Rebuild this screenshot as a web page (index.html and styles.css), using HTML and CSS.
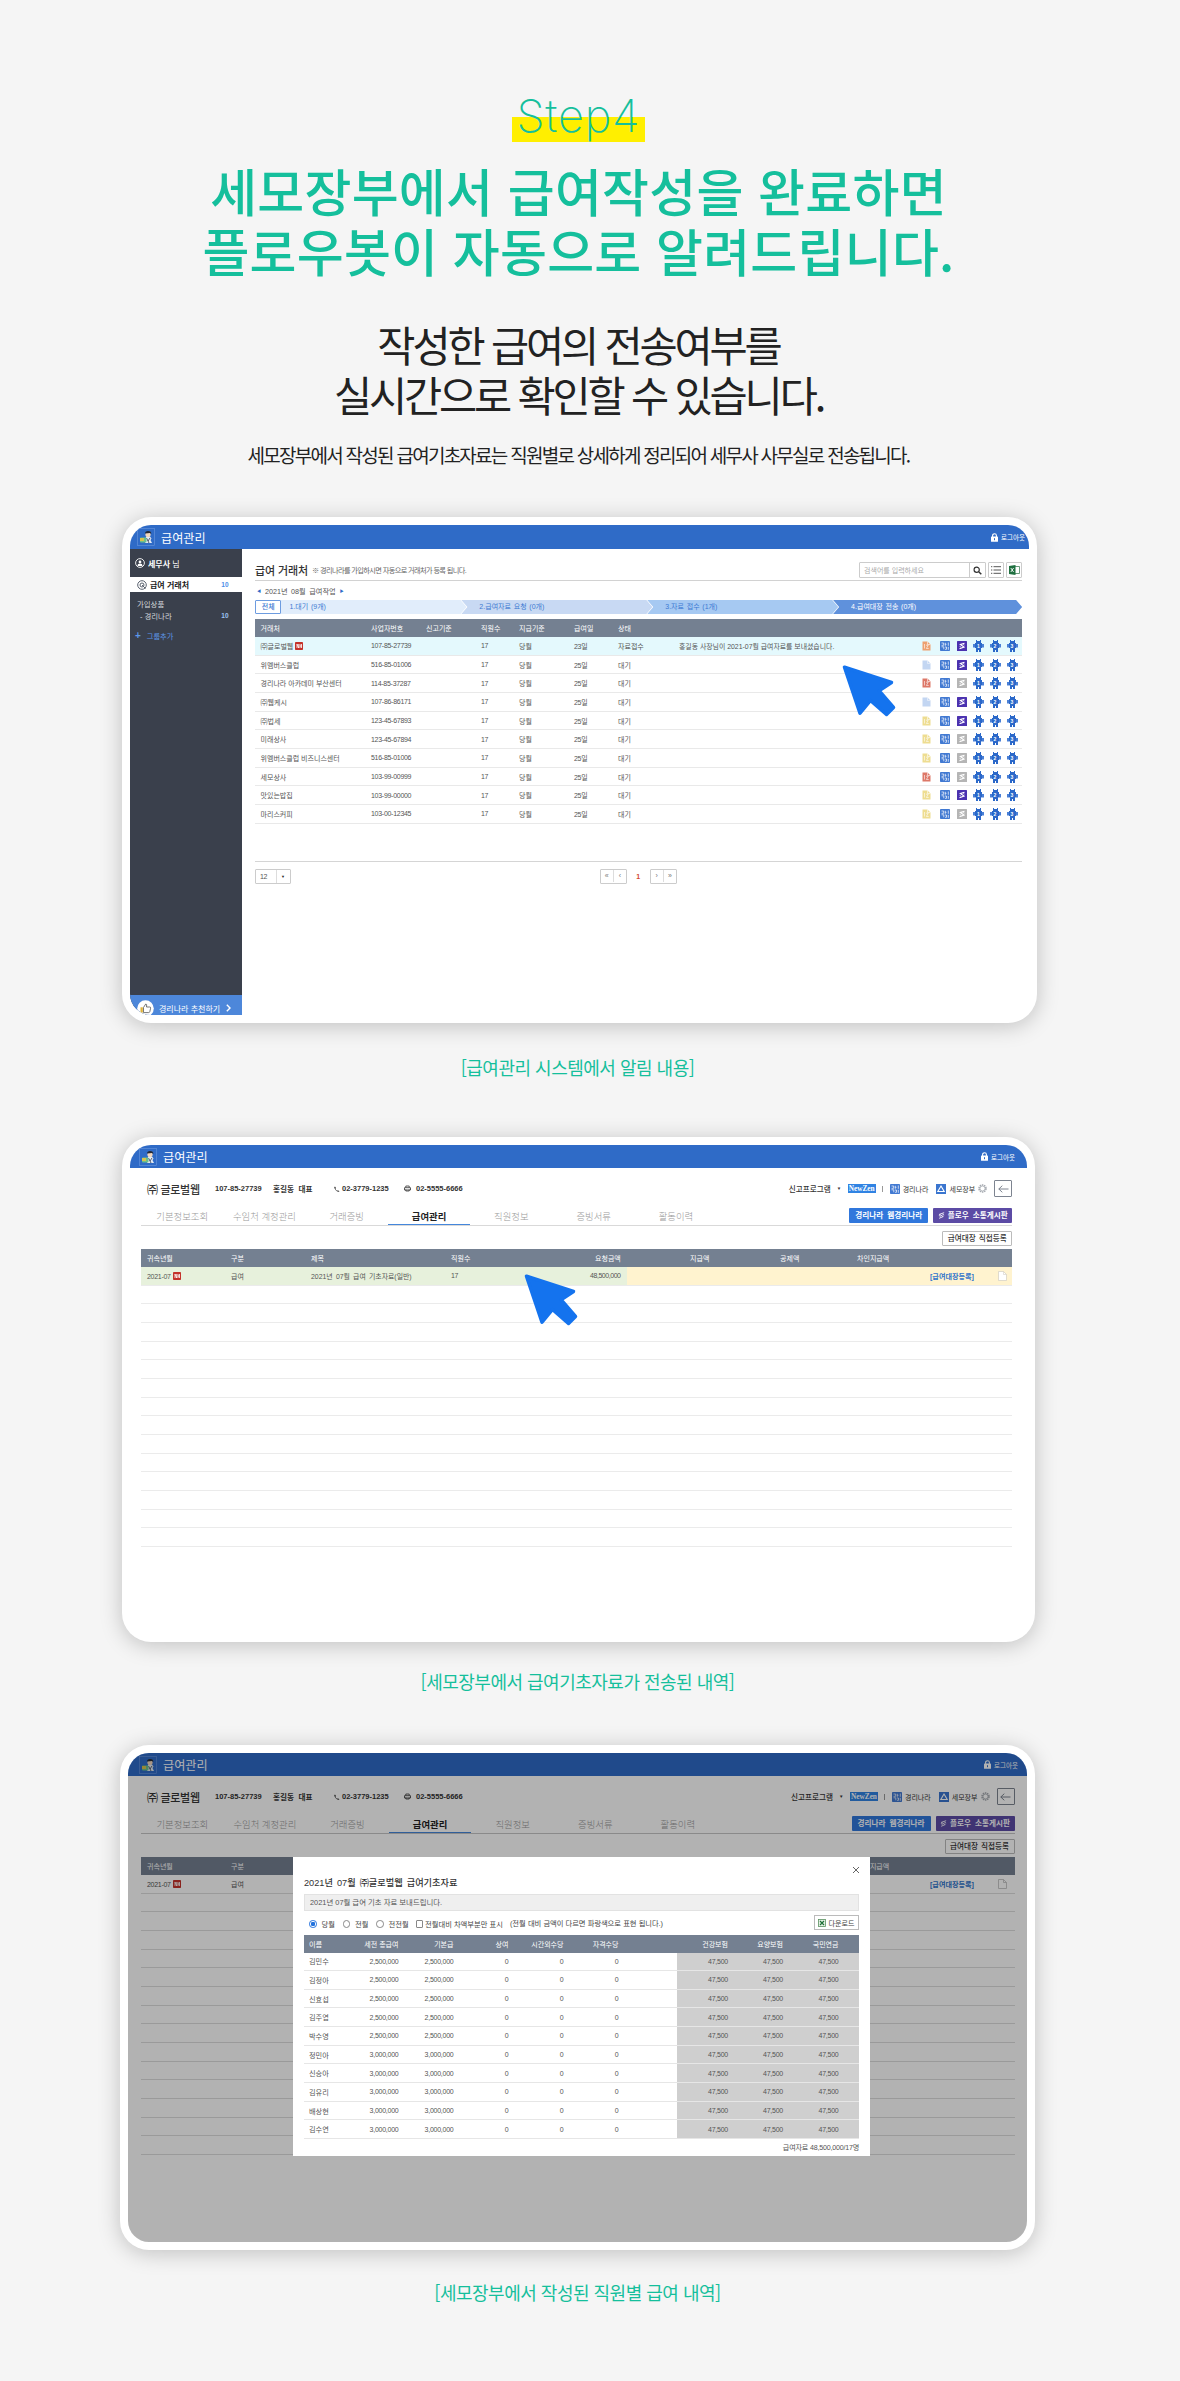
FILE: index.html
```html
<!DOCTYPE html>
<html lang="ko">
<head>
<meta charset="utf-8">
<title>Step4 급여 전송 알림</title>
<link rel="stylesheet" href="styles.css">
</head>
<body>
<svg class="defs" aria-hidden="true">
  <symbol id="logo" viewBox="0 0 18 18"><rect x=".5" y=".5" width="17" height="17" fill="none" stroke="#6b96dd" stroke-width=".6"/><path d="M9 8.500h4l1.500 2-1 1.500 1.500 3H8z" fill="#e3ebf5"/><circle cx="11" cy="6.500" r="2.600" fill="#f3d7bd"/><path d="M8 5.500Q8 3 11 3q3.500 0 3.300 3L13 5z" fill="#262a33"/><path d="M9.500 10l2.500 5M13 10l-2 3" stroke="#30394d" stroke-width=".8"/><rect x="3" y="9.500" width="6.500" height="5" rx="1" fill="#6cc08c"/><path d="M3 10h4v3H3z" fill="#d6c34f"/></symbol>
  <symbol id="lock" viewBox="0 0 7 9"><path d="M1.600 4V2.600a1.900 1.900 0 0 1 3.800 0V4" fill="none" stroke="currentColor" stroke-width="1.100"/><rect y="3.600" width="7" height="5.200" rx=".6" fill="currentColor"/><path d="M3.500 5.200v2" stroke="#2f6bc7" stroke-width="1"/></symbol>
  <symbol id="cursor" viewBox="0 0 54 53"><path d="M2.500 2.200L49.500 17.500L37 25.700L51.500 42.500L44.500 49.500L28.500 35.500L18 48.200Z" fill="#1473ee" stroke="#1473ee" stroke-width="3.500" stroke-linejoin="round"/></symbol>
  <symbol id="user" viewBox="0 0 10 10"><circle cx="5" cy="5" r="4.400" fill="none" stroke="#fff" stroke-width=".9"/><circle cx="5" cy="3.900" r="1.400" fill="#fff"/><path d="M2.600 7.900V7q0-1.600 2.400-1.600T7.400 7v.9z" fill="#fff"/></symbol>
  <symbol id="target" viewBox="0 0 10 10"><circle cx="5" cy="5" r="4.300" fill="none" stroke="#59616e" stroke-width="1"/><circle cx="5" cy="5" r="2" fill="none" stroke="#59616e" stroke-width="1"/><path d="M5 5l3.500 3.500" stroke="#59616e"/></symbol>
  <symbol id="search" viewBox="0 0 9 9"><circle cx="3.700" cy="3.700" r="2.600" fill="none" stroke="#333" stroke-width="1.200"/><path d="M5.700 5.700L8.300 8.300" stroke="#333" stroke-width="1.500"/></symbol>
  <symbol id="list" viewBox="0 0 10 9"><path d="M0 1.200h1.300M0 4.500h1.300M0 7.800h1.300M2.500 1.200H10M2.500 4.500H10M2.500 7.800H10" stroke="#555" stroke-width="1"/></symbol>
  <symbol id="xls" viewBox="0 0 11 10"><path d="M6 1.500h4.500v7H6" fill="#fff" stroke="#43825a" stroke-width=".8"/><path d="M0 1L6.500 0v10L0 9z" fill="#1f7040"/><path d="M1.800 3l2.800 4M4.600 3L1.800 7" stroke="#fff" stroke-width=".9"/></symbol>
  <symbol id="doc" viewBox="0 0 9 10"><path d="M.5 .5H5.500L8.500 3.500V9.500H.5Z" fill="currentColor"/><path d="M5.500 .5V3.500H8.500" fill="none" stroke="#fff" stroke-width=".5"/></symbol>
  <symbol id="docd" viewBox="0 0 9 10"><path d="M.5 .5H5.500L8.500 3.500V9.500H.5Z" fill="currentColor"/><path d="M2.500 3v4.500M4 4.200h2.200L4.400 7.500h2.300M5.500 .5V3.500H8.500" fill="none" stroke="#fff" stroke-width=".6"/></symbol>
  <symbol id="blank" viewBox="0 0 9 10"><path d="M.5 .5H5.500L8.500 3.500V9.500H.5Z" fill="#fff" stroke="#d3cfc2" stroke-width=".7"/><path d="M5.500 .5V3.500H8.500" fill="none" stroke="#d3cfc2" stroke-width=".6"/></symbol>
  <symbol id="outline" viewBox="0 0 9 10"><path d="M.5 .5H5.500L8.500 3.500V9.500H.5ZM5.500 .5V3.500H8.500" fill="none" stroke="#bbb" stroke-width=".8"/></symbol>
  <symbol id="book" viewBox="0 0 10 10"><rect width="10" height="10" rx=".8" fill="#4179d2"/><path d="M1.500 2h2.200v2.300H1.500M5.300 1.800v3M5.300 3.300h1.200M8.300 1.500v3.300M1.500 5.800h2.300v2.500M5 6h1.500v2.300H5M8.300 5.800v3" fill="none" stroke="#fff" stroke-width=".7"/></symbol>
  <symbol id="flow" viewBox="0 0 10 10"><rect width="10" height="10" rx=".5" fill="currentColor"/><path d="M7.500 2.200L3.400 3.500l3.600 2.600-4.500 1.700" fill="none" stroke="#fff" stroke-width="1.200"/><path d="M2.500 5.300l1.700.8M5.800 3.300l1.700.8" stroke="#fff" stroke-width=".7"/></symbol>
  <symbol id="new" viewBox="0 0 8 8"><rect width="8" height="8" rx=".8" fill="#c4322a"/><path d="M2 6V2l1.700 4V2M5 2v4M6.500 2v4M5 4h1.500" fill="none" stroke="#fff" stroke-width=".8"/></symbol>
  <symbol id="thumb" viewBox="0 0 17 17"><circle cx="8.500" cy="8.500" r="8.300" fill="#fff"/><path d="M6.500 7.500l2.300-3.600q1.400.3.700 3.100h3.300q1 0 .8 1.200l-.8 3.500q-.3.900-1.200.9H6.500z" fill="#fff" stroke="#555" stroke-width=".8"/><rect x="3.500" y="7.300" width="2.300" height="5.300" fill="#e0b33a"/></symbol>
  <symbol id="phone" viewBox="0 0 6 6"><path d="M1 .5l1 1.500-.6.7q.5 1.300 1.800 2l.8-.5L5.500 5.500Q4 6.300 2.200 4.700T.2 1.200z" fill="#333"/></symbol>
  <symbol id="fax" viewBox="0 0 7 6"><path d="M1.800 2V.5h3.400V2M.5 2.200h6v2.300h-6zM1.800 4v1.500h3.400V4" fill="none" stroke="#333" stroke-width=".8"/></symbol>
  <symbol id="semo" viewBox="0 0 10 10"><rect width="10" height="10" fill="#3a75cf"/><path d="M5 2L8.200 7.500H1.800z" fill="none" stroke="#fff" stroke-width="1.100"/></symbol>
  <symbol id="gear" viewBox="0 0 9 9"><circle cx="4.500" cy="4.500" r="3.500" fill="none" stroke="#a5a9b0" stroke-width="1.500" stroke-dasharray="1.500 .7"/><circle cx="4.500" cy="4.500" r="2.500" fill="none" stroke="#a5a9b0" stroke-width=".8"/></symbol>
  <symbol id="back" viewBox="0 0 11 8"><path d="M10.500 4H.8M4.300 .7L.8 4l3.500 3.300" fill="none" stroke="#6f7784" stroke-width=".9"/></symbol>
  <symbol id="bolt" viewBox="0 0 7 8"><path d="M6.500 .8L1 2.700l4.500 2.500L.8 7.200M.5 4l2 1M4.500 2.500l2 1" fill="none" stroke="#fff" stroke-width="1"/></symbol>
</svg>

<main class="page">
  <header class="intro">
    <p class="step">Step4</p>
    <h1 class="headline">세모장부에서 급여작성을 완료하면<br><span class="second">플로우봇이 자동으로 알려드립니다.</span></h1>
    <h2 class="sub">작성한 급여의 전송여부를<br><span class="second">실시간으로 확인할 수 있습니다.</span></h2>
    <p class="desc">세모장부에서 작성된 급여기초자료는 직원별로 상세하게 정리되어 세무사 사무실로 전송됩니다.</p>
  </header>

  <section class="card card-list">
    <div class="screen">
      <div class="bar"><svg class="logo"><use href="#logo"/></svg><b class="bar-title">급여관리</b><span class="logout"><svg class="lock"><use href="#lock"/></svg>로그아웃</span></div>
      <div class="split">
        <aside class="side">
          <div class="me"><svg class="i10"><use href="#user"/></svg><span><b>세무사</b> 님</span></div>
          <div class="on"><svg class="i10"><use href="#target"/></svg><b>급여 거래처</b><em>10</em></div>
          <div class="grp">가입상품</div>
          <div class="leaf"><span>- 경리나라</span><em>10</em></div>
          <div class="add"><i>+</i>그룹추가</div>
          <div class="promo"><svg class="thumb"><use href="#thumb"/></svg><span>경리나라 추천하기</span><svg class="chev" viewBox="0 0 5 8"><path d="M.8 .8L4 4 .8 7.200" fill="none" stroke="#fff" stroke-width="1.400"/></svg></div>
        </aside>
        <div class="content">
          <div class="title-row">
            <strong>급여 거래처</strong><small>※ 경리나라를 가입하시면 자동으로 거래처가 등록 됩니다.</small>
            <div class="tools"><div class="search"><span>검색어를 입력하세요</span><i><svg class="i9"><use href="#search"/></svg></i></div><div class="tool"><svg class="i10"><use href="#list"/></svg></div><div class="tool"><svg class="i11"><use href="#xls"/></svg></div></div>
          </div>
          <div class="month"><i>◀</i><span>2021년 08월 급여작업</span><i>▶</i></div>
          <div class="steps"><b class="all">전체</b><span class="s1">1.대기 (9개)</span><span class="s2">2.급여자료 요청 (0개)</span><span class="s3">3.자료 접수 (1개)</span><span class="s4">4.급여대장 전송 (0개)</span></div>
          <div class="clients">
            <div class="row head"><span>거래처</span><span>사업자번호</span><span>신고기준</span><span>직원수</span><span>지급기준</span><span>급여일</span><span>상태</span></div>
            <div class="row hot"><span>㈜글로벌웹<svg class="new"><use href="#new"/></svg></span><span class="n">107-85-27739</span><span></span><span class="n">17</span><span>당월</span><span class="n">23일</span><span>자료접수</span><span class="msg">홍길동 사장님이 2021-07월 급여자료를 보내셨습니다.</span><svg class="doc orange"><use href="#docd"/></svg><svg class="sq"><use href="#book"/></svg><svg class="sq purple"><use href="#flow"/></svg><u>1</u><u>2</u><u>3</u></div>
            <div class="row"><span>위멤버스클럽</span><span class="n">516-85-01006</span><span></span><span class="n">17</span><span>당월</span><span class="n">25일</span><span>대기</span><span></span><svg class="doc sky"><use href="#doc"/></svg><svg class="sq"><use href="#book"/></svg><svg class="sq purple"><use href="#flow"/></svg><u>1</u><u>2</u><u>3</u></div>
            <div class="row"><span>경리나라 아카데미 부산센터</span><span class="n">114-85-37287</span><span></span><span class="n">17</span><span>당월</span><span class="n">25일</span><span>대기</span><span></span><svg class="doc red"><use href="#docd"/></svg><svg class="sq"><use href="#book"/></svg><svg class="sq gray"><use href="#flow"/></svg><u>1</u><u>2</u><u>3</u></div>
            <div class="row"><span>㈜웹케시</span><span class="n">107-86-86171</span><span></span><span class="n">17</span><span>당월</span><span class="n">25일</span><span>대기</span><span></span><svg class="doc sky"><use href="#doc"/></svg><svg class="sq"><use href="#book"/></svg><svg class="sq purple"><use href="#flow"/></svg><u>1</u><u>2</u><u>3</u></div>
            <div class="row"><span>㈜법세</span><span class="n">123-45-67893</span><span></span><span class="n">17</span><span>당월</span><span class="n">25일</span><span>대기</span><span></span><svg class="doc yellow"><use href="#docd"/></svg><svg class="sq"><use href="#book"/></svg><svg class="sq purple"><use href="#flow"/></svg><u>1</u><u>2</u><u>3</u></div>
            <div class="row"><span>미래상사</span><span class="n">123-45-67894</span><span></span><span class="n">17</span><span>당월</span><span class="n">25일</span><span>대기</span><span></span><svg class="doc yellow"><use href="#docd"/></svg><svg class="sq"><use href="#book"/></svg><svg class="sq gray"><use href="#flow"/></svg><u>1</u><u>2</u><u>3</u></div>
            <div class="row"><span>위멤버스클럽 비즈니스센터</span><span class="n">516-85-01006</span><span></span><span class="n">17</span><span>당월</span><span class="n">25일</span><span>대기</span><span></span><svg class="doc yellow"><use href="#docd"/></svg><svg class="sq"><use href="#book"/></svg><svg class="sq gray"><use href="#flow"/></svg><u>1</u><u>2</u><u>3</u></div>
            <div class="row"><span>세모상사</span><span class="n">103-99-00999</span><span></span><span class="n">17</span><span>당월</span><span class="n">25일</span><span>대기</span><span></span><svg class="doc red"><use href="#docd"/></svg><svg class="sq"><use href="#book"/></svg><svg class="sq gray"><use href="#flow"/></svg><u>1</u><u>2</u><u>3</u></div>
            <div class="row"><span>맛있는밥집</span><span class="n">103-99-00000</span><span></span><span class="n">17</span><span>당월</span><span class="n">25일</span><span>대기</span><span></span><svg class="doc yellow"><use href="#docd"/></svg><svg class="sq"><use href="#book"/></svg><svg class="sq purple"><use href="#flow"/></svg><u>1</u><u>2</u><u>3</u></div>
            <div class="row"><span>마리스커피</span><span class="n">103-00-12345</span><span></span><span class="n">17</span><span>당월</span><span class="n">25일</span><span>대기</span><span></span><svg class="doc yellow"><use href="#docd"/></svg><svg class="sq"><use href="#book"/></svg><svg class="sq gray"><use href="#flow"/></svg><u>1</u><u>2</u><u>3</u></div>
          </div>
          <div class="pager"><div class="size"><span>12</span><i>▼</i></div><div class="pg"><i>«</i><i>‹</i></div><b>1</b><div class="pg"><i>›</i><i>»</i></div></div>
        </div>
      </div>
    </div>
    <svg class="cursor cursor-a"><use href="#cursor"/></svg>
  </section>
  <p class="caption">[급여관리 시스템에서 알림 내용]</p>

  <section class="card card-sent">
    <div class="screen detail">
      <div class="bar"><svg class="logo"><use href="#logo"/></svg><b class="bar-title">급여관리</b><span class="logout"><svg class="lock"><use href="#lock"/></svg>로그아웃</span></div>
      <div class="body">
        <div class="info"><strong>㈜ 글로벌웹</strong><b class="bn">107-85-27739</b><b class="ceo">홍길동 대표</b><b class="tel"><svg class="i6"><use href="#phone"/></svg>02-3779-1235</b><b class="tel fax"><svg class="i7"><use href="#fax"/></svg>02-5555-6666</b>
          <div class="links"><b>신고프로그램</b><i>▼</i><mark>NewZen</mark><s></s><svg class="i10"><use href="#book"/></svg><span>경리나라</span><svg class="i10 m"><use href="#semo"/></svg><span>세모장부</span><svg class="i9"><use href="#gear"/></svg><div class="back"><svg class="i11"><use href="#back"/></svg></div></div></div>
        <div class="tabs"><span>기본정보조회</span><span>수임처 계정관리</span><span>거래증빙</span><span class="cur">급여관리</span><span>직원정보</span><span>증빙서류</span><span>활동이력</span><div class="btns"><b>경리나라 웹경리나라</b><b class="violet"><svg class="i7"><use href="#bolt"/></svg>플로우 소통게시판</b></div></div>
        <div class="reg"><b>급여대장 직접등록</b></div>
        <div class="sheet">
          <div class="line head"><span>귀속년월</span><span>구분</span><span>제목</span><span>직원수</span><span>요청금액</span><span>지급액</span><span>공제액</span><span>차인지급액</span></div>
          <div class="line fill"><span class="n">2021-07<svg class="new"><use href="#new"/></svg></span><span>급여</span><span class="t">2021년 07월 급여 기초자료(일반)</span><span class="n">17</span><span class="n sum">48,500,000</span><span></span><span></span><span></span><b>[급여대장등록]</b><svg class="doc"><use href="#blank"/></svg></div>
          <div class="line"></div><div class="line"></div><div class="line"></div><div class="line"></div><div class="line"></div><div class="line"></div><div class="line"></div><div class="line"></div><div class="line"></div><div class="line"></div><div class="line"></div><div class="line"></div><div class="line"></div><div class="line"></div>
        </div>
      </div>
    </div>
    <svg class="cursor cursor-b"><use href="#cursor"/></svg>
  </section>
  <p class="caption">[세모장부에서 급여기초자료가 전송된 내역]</p>

  <section class="card card-modal">
    <div class="screen detail">
      <div class="bar"><svg class="logo"><use href="#logo"/></svg><b class="bar-title">급여관리</b><span class="logout"><svg class="lock"><use href="#lock"/></svg>로그아웃</span></div>
      <div class="body">
        <div class="info"><strong>㈜ 글로벌웹</strong><b class="bn">107-85-27739</b><b class="ceo">홍길동 대표</b><b class="tel"><svg class="i6"><use href="#phone"/></svg>02-3779-1235</b><b class="tel fax"><svg class="i7"><use href="#fax"/></svg>02-5555-6666</b>
          <div class="links"><b>신고프로그램</b><i>▼</i><mark>NewZen</mark><s></s><svg class="i10"><use href="#book"/></svg><span>경리나라</span><svg class="i10 m"><use href="#semo"/></svg><span>세모장부</span><svg class="i9"><use href="#gear"/></svg><div class="back"><svg class="i11"><use href="#back"/></svg></div></div></div>
        <div class="tabs"><span>기본정보조회</span><span>수임처 계정관리</span><span>거래증빙</span><span class="cur">급여관리</span><span>직원정보</span><span>증빙서류</span><span>활동이력</span><div class="btns"><b>경리나라 웹경리나라</b><b class="violet"><svg class="i7"><use href="#bolt"/></svg>플로우 소통게시판</b></div></div>
        <div class="reg"><b>급여대장 직접등록</b></div>
        <div class="sheet">
          <div class="line head"><span>귀속년월</span><span>구분</span><span></span><span></span><span></span><span></span><span></span><span>차인지급액</span></div>
          <div class="line"><span class="n">2021-07<svg class="new"><use href="#new"/></svg></span><span>급여</span><span></span><span></span><span></span><span></span><span></span><span></span><b>[급여대장등록]</b><svg class="doc"><use href="#outline"/></svg></div>
          <div class="line"></div><div class="line"></div><div class="line"></div><div class="line"></div><div class="line"></div><div class="line"></div><div class="line"></div><div class="line"></div><div class="line"></div><div class="line"></div><div class="line"></div><div class="line"></div><div class="line"></div><div class="line"></div>
        </div>
      </div>
      <div class="dim"></div>
      <div class="modal">
        <svg class="close" viewBox="0 0 8 8"><path d="M1 1l6 6M7 1L1 7" stroke="#555" stroke-width=".9"/></svg>
        <h3>2021년 07월 ㈜글로벌웹 급여기초자료</h3>
        <p class="notice">2021년 07월 급여 기초 자료 보내드립니다.</p>
        <div class="filter"><i class="radio sel"></i><span class="w1">당월</span><i class="radio"></i><span class="w2">전월</span><i class="radio"></i><span class="w3">전전월</span><i class="check"></i><span class="w4">전월대비 차액부분만 표시</span><span class="tip">(전월 대비 금액이 다르면 파랑색으로 표현 됩니다.)</span><div class="down"><svg viewBox="0 0 8 8"><rect x=".5" y=".5" width="7" height="7" fill="#e5f1e5" stroke="#5a9160" stroke-width=".8"/><path d="M2 2l4 4M6 2L2 6" stroke="#1f7037" stroke-width="1.200"/></svg>다운로드</div></div>
        <div class="pay">
          <div class="prow head"><span>이름</span><span>세전 총급여</span><span>기본급</span><span>상여</span><span>시간외수당</span><span>자격수당</span><span>건강보험</span><span>요양보험</span><span>국민연금</span></div>
          <div class="prow"><span>김민수</span><span>2,500,000</span><span>2,500,000</span><span>0</span><span>0</span><span>0</span><span>47,500</span><span>47,500</span><span>47,500</span></div>
          <div class="prow"><span>김정아</span><span>2,500,000</span><span>2,500,000</span><span>0</span><span>0</span><span>0</span><span>47,500</span><span>47,500</span><span>47,500</span></div>
          <div class="prow"><span>신효섭</span><span>2,500,000</span><span>2,500,000</span><span>0</span><span>0</span><span>0</span><span>47,500</span><span>47,500</span><span>47,500</span></div>
          <div class="prow"><span>김주엽</span><span>2,500,000</span><span>2,500,000</span><span>0</span><span>0</span><span>0</span><span>47,500</span><span>47,500</span><span>47,500</span></div>
          <div class="prow"><span>박수영</span><span>2,500,000</span><span>2,500,000</span><span>0</span><span>0</span><span>0</span><span>47,500</span><span>47,500</span><span>47,500</span></div>
          <div class="prow"><span>정민아</span><span>3,000,000</span><span>3,000,000</span><span>0</span><span>0</span><span>0</span><span>47,500</span><span>47,500</span><span>47,500</span></div>
          <div class="prow"><span>신승아</span><span>3,000,000</span><span>3,000,000</span><span>0</span><span>0</span><span>0</span><span>47,500</span><span>47,500</span><span>47,500</span></div>
          <div class="prow"><span>김유리</span><span>3,000,000</span><span>3,000,000</span><span>0</span><span>0</span><span>0</span><span>47,500</span><span>47,500</span><span>47,500</span></div>
          <div class="prow"><span>배상현</span><span>3,000,000</span><span>3,000,000</span><span>0</span><span>0</span><span>0</span><span>47,500</span><span>47,500</span><span>47,500</span></div>
          <div class="prow"><span>김수연</span><span>3,000,000</span><span>3,000,000</span><span>0</span><span>0</span><span>0</span><span>47,500</span><span>47,500</span><span>47,500</span></div>
        </div>
        <p class="total">급여자료 48,500,000/17명</p>
      </div>
    </div>
  </section>
  <p class="caption">[세모장부에서 작성된 직원별 급여 내역]</p>
</main>
</body>
</html>
```
FILE: styles.css
```css
* { box-sizing: border-box; }
body { margin: 0; height: 2381px; background: #f5f5f5; color: #222; font-family: "Noto Sans CJK KR", sans-serif; }
.defs { display: none; }
svg { display: block; flex: none; }
i, em { font-style: normal; }
p, h1, h2, h3 { margin: 0; }
.page { width: 1157px; }

/* intro */
.intro { height: 517px; padding-top: 92px; text-align: center; white-space: nowrap; }
.step { width: 133px; height: 50px; margin: 0 auto; line-height: 48px; font-family: Inter, sans-serif; font-weight: 200; font-size: 45px; letter-spacing: .8px; color: #15bf9c; background: linear-gradient(#ffef00, #ffef00) 0 25px / 133px 25px no-repeat; }
.headline { margin-top: 18px; font-size: 51px; line-height: 60px; font-weight: 500; letter-spacing: .25px; color: #15bf9c; }
.sub { margin-top: 40px; font-size: 41.5px; line-height: 49.5px; font-weight: 400; letter-spacing: -3.15px; color: #222; }
.desc { margin-top: 21px; font-size: 19px; line-height: 30px; letter-spacing: -1.74px; }
.caption { padding-right: 2px; text-align: center; font-size: 18px; line-height: 30px; height: 30px; letter-spacing: -.5px; color: #15bf9c; }

/* device frame */
.card { position: relative; margin-left: 122px; padding: 8px; background: #fff; border-radius: 29px; box-shadow: 0 3px 22px rgba(0,0,0,.22); font-family: "Liberation Sans", "Noto Sans CJK KR", sans-serif; font-size: 7px; color: #555; white-space: nowrap; }
.screen { position: relative; height: 100%; overflow: hidden; border-radius: 21px; background: #fff; display: flex; flex-direction: column; }
.card-list { width: 915px; height: 506px; margin-bottom: 29px; }
.card-list + .caption { margin-bottom: 55px; }
.card-sent { width: 913px; height: 505px; margin-bottom: 24px; }
.card-sent + .caption { margin-bottom: 49px; }
.card-modal { margin-left: 120px; width: 915px; height: 505px; margin-bottom: 27px; }
.cursor { position: absolute; width: 54px; height: 53px; }
.cursor-a { left: 720px; top: 148px; }
.cursor-b { left: 402px; top: 137px; }

.bar { height: 24px; flex: none; display: flex; align-items: center; background: #2f6bc7; color: #fff; padding-left: 7px; }
.logo { width: 18px; height: 18px; }
.bar-title { margin-left: 6px; font-size: 12.1px; font-weight: 400; }
.logout { margin-left: auto; padding-right: 4px; display: flex; align-items: center; gap: 3px; font-size: 6.5px; }
.lock { width: 7px; height: 9px; }
.i6 { width: 6px; height: 6px; } .i7 { width: 7px; height: 7px; } .i9 { width: 9px; height: 9px; } .i10 { width: 10px; height: 10px; } .i11 { width: 11px; height: 10px; }
.new { display: inline-block; width: 8px; height: 8px; margin-left: 2px; vertical-align: -1.5px; }
.n { letter-spacing: -.28px; }

/* sidebar */
.split { display: flex; flex: 1; }
.side { width: 111.5px; background: #3a404c; color: #d5d8dd; display: flex; flex-direction: column; font-size: 7.4px; }
.side > div { display: flex; align-items: center; }
.me { height: 28px; padding-left: 5px; gap: 3px; color: #fff; font-size: 8px; }
.on { height: 15px; padding: 0 13px 0 7px; gap: 3px; background: #fff; color: #222; font-size: 8px; }
.side em { margin-left: auto; color: #4d8ee8; font-weight: 700; font-size: 6.5px; }
.side .leaf em { color: #9cc4f5; }
.grp { height: 12px; margin-top: 5px; padding-left: 7px; }
.leaf { height: 13px; padding: 0 13px 0 10px; }
.add { height: 14px; margin-top: 7px; padding-left: 5px; color: #5d97e8; gap: 6px; font-size: 7.2px; }
.add i { font-size: 10px; font-weight: 700; line-height: 10px; }
.promo { height: 20px; margin-top: auto; padding: 6px 11px 0 7px; background: #4d87da; color: #fff; font-size: 8px; gap: 5px; }
.thumb { width: 17px; height: 17px; }
.chev { width: 5px; height: 8px; margin-left: auto; }

/* client list */
.content { width: 767px; margin-left: 13.500px; }
.title-row { height: 32px; display: flex; align-items: center; padding-top: 11px; border-bottom: 1.5px solid #d2d2d2; color: #333; }
.title-row strong { font-size: 11px; font-weight: 500; letter-spacing: -.1px; }
.title-row small { margin-left: 4px; font-size: 7.2px; color: #666; letter-spacing: -.62px; }
.tools { margin-left: auto; display: flex; gap: 2px; }
.search { width: 127px; height: 16px; border: 1px solid #ccc; border-radius: 1px; display: flex; justify-content: space-between; align-items: center; padding-left: 4px; color: #aaa; font-size: 7px; }
.search i { width: 16px; height: 14px; display: grid; place-items: center; border-left: 1px solid #ccc; }
.tool { width: 16px; height: 16px; border: 1px solid #ccc; border-radius: 1px; display: grid; place-items: center; }
.month { height: 19px; display: flex; align-items: center; gap: 4px; padding-left: 2px; }
.month span { font-size: 7.2px; word-spacing: 1.5px; }
.month i { color: #2f6bc7; font-size: 4px; }
.steps { display: flex; height: 14px; line-height: 14px; color: #3d7ad2; font-size: 7px; }
.steps .all { width: 26.5px; margin-right: -4px; border: 1px solid #6d9ce0; text-align: center; line-height: 12px; z-index: 1; background: #fff; font-weight: 500; border-radius: 1px; }
.steps span { width: 191px; margin-right: -5px; clip-path: polygon(0 0, 185px 0, 191px 7px, 185px 14px, 0 14px, 6px 7px); padding-left: 18px; word-spacing: .8px; }
.steps .s1 { width: 189px; padding-left: 12px; background: #e1edfb; clip-path: polygon(0 0, 183px 0, 189px 7px, 183px 14px, 0 14px); }
.steps .s2 { background: #c8d9f3; } .steps .s3 { background: #a6c9f2; } .steps .s4 { background: #5f91dc; color: #fff; margin-right: 0; width: 189px; clip-path: polygon(0 0, 183px 0, 189px 7px, 183px 14px, 0 14px, 6px 7px); }
.clients { margin-top: 4.500px; padding-bottom: 37px; border-bottom: 1.5px solid #d5d5d5; }
.row { height: 18.670px; display: grid; grid-template-columns: 110.500px 55px 55px 38px 55px 44px 61px 243px 18px 16.500px 16.500px 16.500px 17px 17px; align-items: center; padding-left: 5.500px; border-bottom: 1px solid #e9e9e9; }
.head { background: #748091; color: #fff; border: 0; }
.hot { background: #e4f9fd; }
.row .msg { font-size: 6.9px; }
.doc { width: 9px; height: 10px; }
.orange { color: #eda070; } .sky { color: #c3d6f2; } .red { color: #dd7868; } .yellow { color: #eedd91; }
.sq { width: 10px; height: 10px; } .purple { color: #4b32b0; } .gray { color: #b5b5b5; }
.row u { width: 11px; height: 12px; text-decoration: none; text-align: center; color: #fff; font: 700 5px/13px "Liberation Sans", sans-serif; background: radial-gradient(ellipse 3.700px 4.500px at 50% 5.500px, #2b68c9 94%, transparent), linear-gradient(#4a80d6, #4a80d6) 0 4.500px / 11px 3.500px no-repeat, linear-gradient(#2b68c9, #2b68c9) 3px 0 / 1px 4px no-repeat, linear-gradient(#2b68c9, #2b68c9) 7px 0 / 1px 4px no-repeat, linear-gradient(#2b68c9, #2b68c9) 3px 8px / 2px 4px no-repeat, linear-gradient(#2b68c9, #2b68c9) 6px 8px / 2px 4px no-repeat; }
.pager { display: flex; margin-top: 7px; height: 15px; }
.pager > div { display: flex; border: 1px solid #ccc; border-radius: 1px; align-items: center; }
.size { width: 35.500px; margin-right: 309px; }
.size span { width: 21px; padding-left: 4px; line-height: 13px; border-right: 1px solid #ddd; letter-spacing: -.3px; }
.size i { font-size: 4px; margin-left: 4px; color: #222; }
.pg { width: 27.500px; }
.pg i { flex: 1; text-align: center; line-height: 12px; font-size: 7px; color: #777; }
.pg i + i { border-left: 1px solid #ddd; }
.pager b { width: 22.500px; text-align: center; line-height: 16px; color: #d3492f; }

/* payroll detail */
.detail .bar { height: 23px; padding-left: 9px; }
.detail .logout { padding-right: 12px; }
.body { padding: 0 14.800px 0 11px; }
.info { height: 42px; padding: 0 0 1px 6px; display: flex; align-items: center; color: #333; }
.info strong { width: 68px; font-size: 11px; font-weight: 500; letter-spacing: -.3px; }
.info > b { font-size: 7.500px; }
.info .bn { width: 58px; } .info .ceo { width: 61px; font-size: 7.6px; word-spacing: 2.500px; }
.tel { display: flex; align-items: center; gap: 2px; width: 70px; }
.info .fax { gap: 5px; }
.links { margin-left: auto; display: flex; align-items: center; font-size: 7px; }
.links b { font-weight: 500; font-size: 7.6px; }
.links i { font-size: 4.500px; margin: 0 6.500px 0 6px; }
.links mark { width: 28px; height: 9px; background: #3083e3; color: #fff; font: 700 7.300px/9px "Liberation Serif", serif; text-align: center; }
.links s { width: 1px; height: 6px; margin: 0 7px 0 6px; background: #999; }
.links span { margin-left: 3px; }
.links .m { margin-left: 8px; }
.links .i9 { margin: 0 7px 0 3px; }
.back { width: 18px; height: 17px; border: 1px solid #7d8490; border-radius: 1px; display: grid; place-items: center; }
.tabs { height: 16px; display: flex; border-bottom: 1px solid #d9d9d9; font-size: 9.4px; color: #999; line-height: 13px; }
.tabs > span { width: 82.300px; text-align: center; font-weight: 300; }
.tabs .cur { font-weight: 700; color: #222; border-bottom: 1.5px solid #4587dc; }
.btns { margin-left: auto; display: flex; gap: 5px; margin-top: -2px; }
.btns b { width: 79px; height: 15px; background: #3077dc; border-radius: 1px; color: #fff; font-size: 7.600px; word-spacing: 2px; display: flex; align-items: center; justify-content: center; gap: 3px; }
.btns .violet { background: #5c4ba5; }
.reg { height: 23px; display: flex; justify-content: flex-end; padding-top: 5px; }
.reg b { width: 70px; height: 15px; border: 1px solid #bbb; border-radius: 1px; text-align: center; line-height: 13px; font-size: 7.600px; word-spacing: 1px; color: #333; font-weight: 500; }
.line { height: 18.670px; display: grid; grid-template-columns: 84px 80px 140px 144px 95px 90px 77px 73px 68px 12px; align-items: center; padding-left: 6px; border-bottom: 1px solid #ebebeb; }
.line.head { border: 0; height: 18px; }
.fill { background: linear-gradient(90deg, #e7f1dc 485.500px, #fff3cf 485.500px); }
.line .t { font-size: 6.9px; word-spacing: 1.3px; }
.line .sum { margin-left: -5px; letter-spacing: -.45px; }
.line b { color: #3174cb; font-size: 7.1px; }
.card-modal .body { padding: 0 12.500px 0 13px; }
.card-modal .bar { padding-left: 11px; }
.card-modal .tabs > span { width: 82.600px; }
.card-modal .tabs { border-color: #c6c6c6; }
.card-modal .line { border-color: #ddd; }
.card-modal .logout { padding-right: 9px; }
.dim { position: absolute; inset: 0; background: rgba(0,0,0,.302); }

/* payroll modal */
.modal { position: absolute; left: 165px; top: 104px; width: 576.500px; height: 298.500px; padding: 19px 10.500px 0 11px; background: #fff; }
.close { position: absolute; right: 10px; top: 9px; width: 8px; height: 8px; }
.modal h3 { height: 18px; line-height: 15px; font-size: 9.200px; word-spacing: 1.500px; font-weight: 500; color: #333; }
.notice { height: 17px; line-height: 15px; padding-left: 5px; border: 1px solid #e2e2e2; background: #efefef; font-size: 7.400px; }
.filter { height: 23.500px; display: flex; align-items: center; padding-left: 5px; font-size: 7.300px; color: #444; padding-top: 2px; }
.radio { width: 7.500px; height: 7.500px; border: 1px solid #888; border-radius: 50%; margin-right: 5px; }
.sel { border-color: #2473dd; background: radial-gradient(circle, #2473dd 2px, #fff 2.400px); }
.w1, .w2 { width: 21px; } .w3 { width: 27px; }
.check { width: 7.500px; height: 7.500px; border: 1px solid #888; border-radius: 1px; margin-right: 2px; }
.w4 { width: 85px; } .tip { letter-spacing: -.1px; word-spacing: .4px; padding-bottom: 2px; }
.down { margin-left: auto; width: 45px; height: 15px; margin-bottom: 2px; display: flex; align-items: center; justify-content: center; gap: 2px; border: 1px solid #bbb; font-size: 7.100px; }
.down svg { width: 8px; height: 8px; }
.prow { height: 18.670px; display: grid; grid-template-columns: 34.500px 55px 55px 55px 55px 55px 109.500px 55px 55.500px; align-items: center; text-align: right; padding-left: 5px; border-bottom: 1px solid #e6e6e6; background: linear-gradient(90deg, transparent 373.500px, #cfcfcf 373.500px); letter-spacing: -.25px; }
.prow span:first-child { text-align: left; letter-spacing: 0; font-size: 7.2px; }
.prow.head { height: 18px; background: #748091; border: 0; letter-spacing: 0; }
.total { text-align: right; line-height: 18px; font-size: 7.100px; letter-spacing: -.2px; }
```
